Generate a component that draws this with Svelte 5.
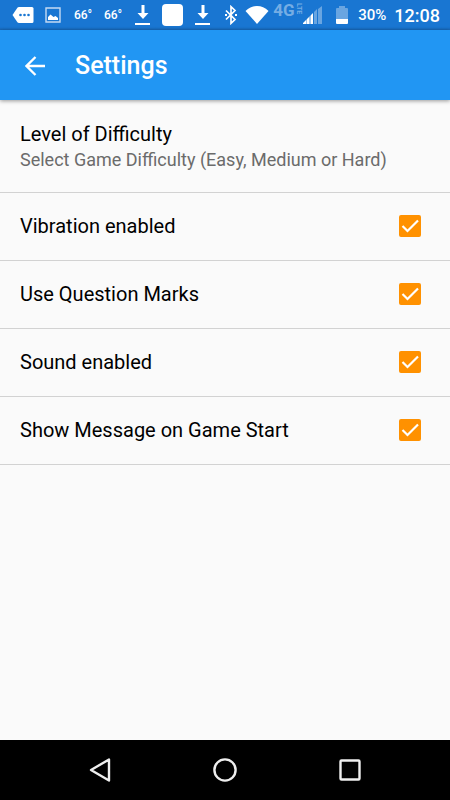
<script>
  let options = $state([
    { id: 'vibration', label: 'Vibration enabled', enabled: true },
    { id: 'question-marks', label: 'Use Question Marks', enabled: true },
    { id: 'sound', label: 'Sound enabled', enabled: true },
    { id: 'start-message', label: 'Show Message on Game Start', enabled: true }
  ]);
</script>

{#snippet download()}
  <svg width="16" height="22" viewBox="0 0 16 22" fill="#fff">
    <path d="M6.500 1h3v8h4L8 15 2.500 9h4z" />
    <path d="M0 19h15v2H0z" />
  </svg>
{/snippet}

<div class="screen">
  <div class="status-bar">
    <div class="notifications">
      <span>
        <svg width="22" height="18" viewBox="0 0 22 18">
          <path d="M7 1h13q1.500 0 1.500 1.500v13q0 1.500-1.500 1.500H7q-1 0-1.600-.8L.5 9l4.900-7.200Q6 1 7 1z" fill="#fff" />
          <g fill="#1976d2">
            <circle cx="8.500" cy="9" r="1.300" />
            <circle cx="12.500" cy="9" r="1.300" />
            <circle cx="16.500" cy="9" r="1.300" />
          </g>
        </svg>
      </span>
      <span>
        <svg width="16" height="18" viewBox="0 0 16 18">
          <path d="M1 2h14v14H1z" fill="none" stroke="#c5daf3" stroke-width="1.400" />
          <path d="M3 14v-3l2.500-2.500 3 2.500 2-1 2.500 2v2z" fill="#fff" />
        </svg>
      </span>
      <span class="degrees">66°</span>
      <span class="degrees">66°</span>
      <span>{@render download()}</span>
      <span>
        <svg width="22" height="22" viewBox="0 0 22 22">
          <rect width="21" height="22" rx="4" fill="#fff" />
        </svg>
      </span>
      <span>{@render download()}</span>
    </div>

    <div class="system">
      <svg width="12" height="20" viewBox="0 0 12 20" fill="none" stroke="#fff" stroke-width="1.700">
        <path d="M1 5.500l9 9L6 18.300V1.700l4 3.800-9 9" />
        <path d="M0 9h2v2H0zM10 9h2v2h-2z" fill="#fff" stroke="none" />
      </svg>
      <svg width="24" height="20" viewBox="0 0 24 20">
        <path d="M.5 6Q5.500 1 12 1t11.500 5L12 19z" fill="#fff" />
      </svg>
      <div class="network"><b>4G</b><small>LTE</small></div>
      <svg class="signal" width="20" height="20" viewBox="0 0 20 20">
        <path d="M0 18l3-3v4H0zM4 14l2-2v7H4zM8 10l2-2v11H8z" fill="#fff" />
        <path d="M3 15l1-1v5H3zM6 12l2-2v9H6z" fill="#fff" opacity=".6" />
        <path d="M11 7l3-3v15h-3zM15 4l4-3v18h-4z" fill="#fff" opacity=".35" />
      </svg>
      <svg class="battery" width="12" height="20" viewBox="0 0 12 20">
        <path d="M3 1h6v2h2q1 0 1 1v10H0V4q0-1 1-1h2z" fill="#fff" opacity=".35" />
        <path d="M0 14h12v4q0 1-1 1H1q-1 0-1-1z" fill="#fff" />
      </svg>
      <span class="percent">30%</span>
      <time>12:08</time>
    </div>
  </div>

  <header>
    <button type="button" aria-label="Back">
      <svg width="20" height="20" viewBox="0 0 20 20" fill="none" stroke="#fff" stroke-width="2.300">
        <path d="M20 10H2M10.500 1l-9 9 9 9" />
      </svg>
    </button>
    <h1>Settings</h1>
  </header>

  <main>
    <button type="button" class="difficulty">
      <span>Level of Difficulty</span>
      <small>Select Game Difficulty (Easy, Medium or Hard)</small>
    </button>
    {#each options as option (option.id)}
      <label for={option.id}>
        {option.label}
        <span class="checkbox">
          <input type="checkbox" id={option.id} bind:checked={option.enabled} />
          <svg width="22" height="22" viewBox="0 0 22 22" fill="none" stroke="#fff" stroke-width="2.200">
            <path d="M3.500 11l5 5L19 5.500" />
          </svg>
        </span>
      </label>
    {/each}
  </main>

  <nav>
    <button type="button" aria-label="Back">
      <svg width="24" height="24" viewBox="0 0 24 24">
        <path d="M21 1.500v21L3 12z" />
      </svg>
    </button>
    <button type="button" aria-label="Home">
      <svg width="24" height="24" viewBox="0 0 24 24">
        <circle cx="12" cy="12" r="10.600" />
      </svg>
    </button>
    <button type="button" aria-label="Recent apps">
      <svg width="24" height="24" viewBox="0 0 24 24">
        <rect x="2.500" y="2.500" width="19" height="19" rx="1" />
      </svg>
    </button>
  </nav>
</div>

<style>
  :global(body) {
    margin: 0;
  }

  .screen {
    display: flex;
    flex-direction: column;
    min-height: 100vh;
    background: #fafafa;
    color: #000;
    font-family: Roboto, sans-serif;
  }

  svg {
    display: block;
    flex: none;
  }

  button {
    padding: 0;
    border: none;
    background: none;
    color: inherit;
    font: inherit;
    cursor: pointer;
  }

  .status-bar {
    display: flex;
    justify-content: space-between;
    height: 30px;
    padding: 0 10px 0 8px;
    box-sizing: border-box;
    background: linear-gradient(#1976d2 27px, #1768ba);
    color: #fff;
  }

  .notifications {
    display: flex;
    align-items: center;

    span {
      display: flex;
      justify-content: center;
      width: 30px;
    }

    .degrees {
      font-size: 12px;
      font-weight: 500;
    }
  }

  .system {
    display: flex;
    align-items: center;

    svg + svg {
      margin-left: 8px;
    }

    .signal + .battery {
      margin-left: 13px;
    }
  }

  .network {
    display: flex;
    align-self: flex-start;
    width: 28px;
    margin: 3px 2px 0 4px;
    color: #75ade4;

    b {
      font-size: 17px;
      line-height: 14px;
    }

    small {
      font-size: 7px;
      font-weight: 700;
      line-height: 7px;
      writing-mode: vertical-rl;
    }
  }

  .percent {
    margin-left: 10px;
    font-size: 15px;
    font-weight: 500;
  }

  time {
    margin-left: 8px;
    font-size: 18px;
    font-weight: 500;
  }

  header {
    display: flex;
    align-items: center;
    gap: 30px;
    height: 70px;
    padding: 2px 25px 0;
    box-sizing: border-box;
    background: #2196f3;
    box-shadow: 0 1px 4px rgb(0 0 0 / .4);
    color: #fff;

    h1 {
      margin: 0;
      font-size: 25px;
      font-weight: 500;
      line-height: 30px;
    }
  }

  main {
    flex: 1;
    font-size: 20px;
    line-height: 24px;
  }

  .difficulty,
  label {
    display: flex;
    box-sizing: border-box;
    width: 100%;
    border-bottom: 1px solid #d2d2d2;
  }

  .difficulty {
    flex-direction: column;
    gap: 2px;
    padding: 22px 20px 20px;
    text-align: left;

    small {
      color: #6b6b6b;
      font-size: 18px;
    }
  }

  label {
    align-items: center;
    justify-content: space-between;
    padding: 21px 29px 22px 20px;
    cursor: pointer;
  }

  .checkbox {
    display: grid;

    input,
    svg {
      grid-area: 1 / 1;
    }

    input {
      appearance: none;
      width: 22px;
      height: 22px;
      margin: 0;
      border: 2px solid #757575;
      border-radius: 2px;

      &:checked {
        border-color: #ff9100;
        background: #ff9100;
      }

      &:not(:checked) + svg {
        visibility: hidden;
      }
    }

    svg {
      pointer-events: none;
    }
  }

  nav {
    display: flex;
    align-items: center;
    justify-content: center;
    gap: 101px;
    height: 60px;
    background: #000;

    svg {
      fill: none;
      stroke: #eee;
      stroke-width: 2.400;
      stroke-linejoin: round;
    }
  }
</style>
